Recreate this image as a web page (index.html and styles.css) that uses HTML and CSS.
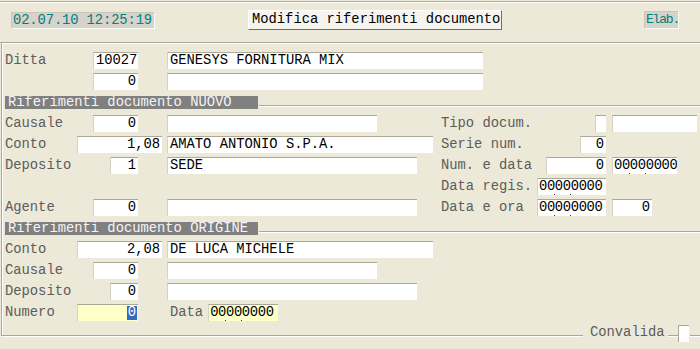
FILE: index.html
```html
<!DOCTYPE html>
<html lang="it">
<head>
    <meta charset="UTF-8">
    <title>Modifica riferimenti documento</title>
    <link rel="stylesheet" href="styles.css">
</head>
<body>
    <div class="topbar">
        <div class="clock">02.07.10 12:25:19</div>
        <div class="btn">Modifica riferimenti documento</div>
        <div class="status">Elab.</div>
    </div>

    <div class="panel">
        <!-- Ditta -->
        <div class="line">
            <span class="lbl">Ditta</span>
            <span class="code"><span class="inp num w45">10027</span></span>
            <span class="inp w316">GENESYS FORNITURA MIX</span>
        </div>
        <div class="line">
            <span class="lbl"></span>
            <span class="code"><span class="inp num w45">0</span></span>
            <span class="inp w316"></span>
        </div>

        <div class="section">
            <div class="bar">Riferimenti documento NUOVO</div>
            <div class="rule"></div>
        </div>

        <div class="line">
            <div class="left">
                <span class="lbl">Causale</span>
                <span class="code"><span class="inp num w45">0</span></span>
                <span class="inp w210"></span>
            </div>
            <div class="right">
                <div class="rcell"><span class="lbl">Tipo docum.</span><span class="inp w11"></span></div>
                <span class="inp w85 next"></span>
            </div>
        </div>
        <div class="line">
            <div class="left">
                <span class="lbl">Conto</span>
                <span class="code"><span class="inp num w85">1,08</span></span>
                <span class="inp w266">AMATO ANTONIO S.P.A.</span>
            </div>
            <div class="right">
                <div class="rcell"><span class="lbl">Serie num.</span><span class="inp num w26">0</span></div>
            </div>
        </div>
        <div class="line">
            <div class="left">
                <span class="lbl">Deposito</span>
                <span class="code"><span class="inp num w28">1</span></span>
                <span class="inp w250">SEDE</span>
            </div>
            <div class="right">
                <div class="rcell"><span class="lbl">Num. e data</span><span class="inp num w60">0</span></div>
                <span class="inp date w65 next">00000000</span>
            </div>
        </div>
        <div class="line">
            <div class="left"></div>
            <div class="right">
                <div class="rcell"><span class="lbl">Data regis.</span><span class="inp date w69">00000000</span></div>
            </div>
        </div>
        <div class="line">
            <div class="left">
                <span class="lbl">Agente</span>
                <span class="code"><span class="inp num w45">0</span></span>
                <span class="inp w250"></span>
            </div>
            <div class="right">
                <div class="rcell"><span class="lbl">Data e ora</span><span class="inp date w69">00000000</span></div>
                <span class="inp num w40 next">0</span>
            </div>
        </div>

        <div class="section">
            <div class="bar">Riferimenti documento ORIGINE</div>
            <div class="rule"></div>
        </div>

        <div class="line">
            <span class="lbl">Conto</span>
            <span class="code"><span class="inp num w85">2,08</span></span>
            <span class="inp w266">DE LUCA MICHELE</span>
        </div>
        <div class="line">
            <span class="lbl">Causale</span>
            <span class="code"><span class="inp num w45">0</span></span>
            <span class="inp w210"></span>
        </div>
        <div class="line">
            <span class="lbl">Deposito</span>
            <span class="code"><span class="inp num w28">0</span></span>
            <span class="inp w250"></span>
        </div>
        <div class="line">
            <span class="lbl">Numero</span>
            <span class="code"><span class="inp num w61 active"><span class="sel">0</span></span></span>
            <span class="lbl small">Data</span>
            <span class="inp date w70 active">00000000</span>
        </div>
    </div>

    <div class="foot">
        <div class="seg first"></div>
        <span class="flbl">Convalida</span>
        <div class="seg short"></div>
        <span class="check"></span>
        <div class="seg fill"></div>
    </div>
</body>
</html>
```

FILE: styles.css
```css
* {
    box-sizing: border-box;
    margin: 0;
    padding: 0;
}

body {
    width: 700px;
    height: 349px;
    overflow: hidden;
    background-color: #ece9d8;
    font-family: "Liberation Mono", "DejaVu Sans Mono", monospace;
    font-size: 13.8px;
    color: #000;
}

/* top bar */
.topbar {
    margin-top: 1px;
    height: 42px;
    border-top: 1px solid #b4b09d;
    border-bottom: 1px solid #aca899;
    box-shadow: inset 0 1px 0 #fbfaf5, 0 1px 0 #fff;
    display: flex;
    align-items: flex-start;
    padding-left: 11px;
}

.clock,
.status {
    background-color: #d6d3cb;
    color: #008080;
    border: 1px solid;
    border-color: #c9c6b8 #fbfbf8 #fbfbf8 #c9c6b8;
    line-height: 15px;
    white-space: nowrap;
    overflow: hidden;
}

.clock {
    width: 144px;
    height: 17px;
    margin-top: 10px;
    padding-left: 1px;
    letter-spacing: -0.1px;
}

.btn {
    width: 254px;
    height: 20px;
    margin-top: 8px;
    margin-left: 93px;
    background-color: #f5f4ef;
    border: 1px solid;
    border-color: #fff #716f64 #716f64 #fff;
    line-height: 18px;
    padding-left: 3px;
    white-space: nowrap;
}

.status {
    width: 35px;
    height: 18px;
    margin-top: 9px;
    margin-left: 142px;
    font-size: 13px;
    letter-spacing: -1.2px;
    line-height: 16px;
    padding-left: 1px;
}

/* main panel */
.panel {
    margin-left: 1px;
    height: 292px;
    border-left: 1px solid #aca899;
    box-shadow: inset 1px 0 0 #fff;
    padding: 9px 0 0 3px;
}

.line {
    display: flex;
    height: 17px;
    margin-bottom: 4px;
}

.left {
    display: flex;
    width: 436px;
}

.right {
    display: flex;
}

.rcell {
    display: flex;
    justify-content: space-between;
    width: 165px;
}

.lbl {
    display: block;
    width: 72px;
    line-height: 18px;
    color: #5c5c5c;
    white-space: nowrap;
}

.rcell .lbl {
    width: auto;
}

.lbl.small {
    width: auto;
    margin-left: 3px;
    margin-right: 5px;
}

.code {
    display: flex;
    justify-content: flex-end;
    width: 90px;
}

.code .inp {
    margin-right: 29px;
}

.code .inp.w85 {
    margin-right: 5px;
}

.inp {
    display: block;
    position: relative;
    height: 17px;
    background-color: #fff;
    border-top: 1px solid #aca899;
    border-left: 1px solid #d6d3c6;
    line-height: 16px;
    padding: 0 2px;
    white-space: nowrap;
    overflow: hidden;
}

.inp.num {
    text-align: right;
}

.inp.next {
    margin-left: 6px;
}

.inp.date {
    padding: 0 0 0 1px;
    letter-spacing: -0.35px;
}

.inp.active {
    background-color: #ffffc8;
}

/* date mask dots */
.inp.date::before,
.inp.date::after {
    content: "";
    position: absolute;
    bottom: 0;
    width: 1px;
    height: 1px;
    background-color: #333;
}

.inp.date::before {
    left: 16px;
}

.inp.date::after {
    left: 32px;
}

.sel {
    display: inline-block;
    background-color: #316ac5;
    color: #fff;
    line-height: 14px;
    padding: 0 1px;
    margin-right: -1px;
}

.w11 { width: 11px; }
.w26 { width: 26px; }
.w28 { width: 28px; }
.w40 { width: 40px; }
.w45 { width: 45px; }
.w60 { width: 60px; }
.w61 { width: 61px; }
.w65 { width: 65px; }
.w69 { width: 69px; }
.w70 { width: 70px; }
.w85 { width: 85px; }
.w210 { width: 210px; }
.w250 { width: 250px; }
.w266 { width: 266px; }
.w316 { width: 316px; }

/* section headers */
.section {
    display: flex;
    margin: 6px 0;
    height: 13px;
}

.bar {
    width: 253px;
    background-color: #808080;
    color: #f4f4f4;
    line-height: 14px;
    padding-left: 3px;
    white-space: nowrap;
    overflow: hidden;
}

.rule {
    flex: 1;
    height: 0;
    margin-top: 9px;
    margin-left: 1px;
    border-top: 1px solid #aca899;
    box-shadow: 0 1px 0 #fff;
}

/* bottom legend */
.foot {
    display: flex;
    align-items: flex-start;
    height: 17px;
    margin-top: -10px;
}

.seg {
    height: 0;
    margin-top: 10px;
    border-top: 1px solid #aca899;
    box-shadow: 0 1px 0 #fff;
}

.seg.first {
    margin-left: 1px;
    width: 582px;
}

.seg.short {
    width: 10px;
    margin-left: 3px;
}

.seg.fill {
    flex: 1;
    margin-left: 1px;
}

.flbl {
    margin-left: 7px;
    margin-top: -1px;
    line-height: 17px;
    color: #5c5c5c;
}

.check {
    display: block;
    width: 11px;
    height: 17px;
    background-color: #fff;
    border-top: 1px solid #aca899;
    border-left: 1px solid #aca899;
}
```
